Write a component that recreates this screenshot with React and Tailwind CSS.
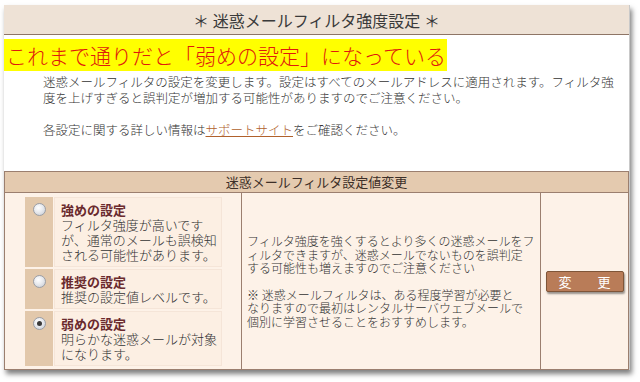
import React from 'react';

const FONT = { fontFamily: '"Noto Sans CJK JP", "Noto Sans", sans-serif' };

function Radio({ checked }) {
  return (
    <span className="relative mt-[6px] block h-[13px] w-[13px] rounded-full border border-[#9a9ea6] bg-[radial-gradient(circle_at_40%_35%,#ffffff_0%,#e8eaee_45%,#c3c8d0_100%)]">
      {checked && (
        <span className="absolute left-[3px] top-[3px] h-[5px] w-[5px] rounded-full bg-[#3a3a3a]" />
      )}
    </span>
  );
}

function Option({ checked, title, lines }) {
  return (
    <div className="flex">
      <div className="flex w-[28px] justify-center bg-[#E2C8AB]">
        <Radio checked={checked} />
      </div>
      <div className="ml-[1px] w-[168px] border border-[#F5E5D8] bg-[#FCEFE3] px-[6px] py-[4px] text-[13px] leading-[15px] whitespace-nowrap">
        <div className="font-bold text-[#6A2A2E]">{title}</div>
        {lines.map((l, i) => (
          <div key={i} className="font-light text-[#333]">{l}</div>
        ))}
      </div>
    </div>
  );
}

export default function App() {
  return (
    <div className="h-[382px] w-[640px] overflow-hidden bg-white" style={FONT}>
      <div className="ml-[4px] mt-[5px] w-[626px] border-r border-[#c9c9c9] bg-white shadow-[2px_4px_5px_rgba(0,0,0,0.5)]">
        {/* title bar */}
        <div className="flex h-[30px] items-center justify-center border-b border-[#8E7566] bg-[#EEE2D6] text-[16px] text-[#3a3a3a]">
          ＊ 迷惑メールフィルタ強度設定 ＊
        </div>

        {/* intro */}
        <div className="h-[136px] pt-[4px]">
          <div className="h-[32px] w-[443px] bg-[#FFFF00] pl-[2px] text-[21px] leading-[32px] font-light whitespace-nowrap text-[#E0190C]">
            これまで通りだと「弱めの設定」になっている
          </div>
          <div className="mt-[3px] pl-[39px] text-[12.5px] leading-[16px] font-light text-[#333]">
            <p>迷惑メールフィルタの設定を変更します。設定はすべてのメールアドレスに適用されます。フィルタ強</p>
            <p>度を上げすぎると誤判定が増加する可能性がありますのでご注意ください。</p>
            <p className="mt-[16px]">
              各設定に関する詳しい情報は
              <span className="text-[#B0612C] underline">サポートサイト</span>
              をご確認ください。
            </p>
          </div>
        </div>

        {/* settings table */}
        <div className="border border-[#9B7F6F]">
          <div className="flex h-[21px] items-center justify-center border-b border-[#9B7F6F] bg-[#E4CAAF] text-[13px] text-[#3d2f28]">
            迷惑メールフィルタ設定値変更
          </div>
          <div className="grid h-[176px] grid-cols-[236px_300px_1fr] bg-[#FDF2E8]">
            <div className="flex flex-col gap-[2px] pl-[20px] pt-[4px]">
              <Option
                title="強めの設定"
                lines={['フィルタ強度が高いです', 'が、通常のメールも誤検知', 'される可能性があります。']}
              />
              <Option title="推奨の設定" lines={['推奨の設定値レベルです。']} />
              <Option checked title="弱めの設定" lines={['明らかな迷惑メールが対象', 'になります。']} />
            </div>

            <div className="flex items-center border-x border-[#9B7F6F] px-[5px] text-[12px] leading-[13.5px] font-light whitespace-nowrap text-[#333]">
              <div>
                <p>フィルタ強度を強くするとより多くの迷惑メールをフ</p>
                <p>ィルタできますが、迷惑メールでないものを誤判定</p>
                <p>する可能性も増えますのでご注意ください</p>
                <p className="mt-[13px]">※ 迷惑メールフィルタは、ある程度学習が必要と</p>
                <p>なりますので最初はレンタルサーバウェブメールで</p>
                <p>個別に学習させることをおすすめします。</p>
              </div>
            </div>

            <div className="flex items-center justify-center">
              <button className="h-[21px] w-[78px] rounded-[2px] border border-[#7F5538] bg-[#B97C58] text-[13px] leading-[19px] text-white shadow-[1px_2px_2px_rgba(0,0,0,0.4)]">
                変　　更
              </button>
            </div>
          </div>
        </div>
      </div>
    </div>
  );
}
